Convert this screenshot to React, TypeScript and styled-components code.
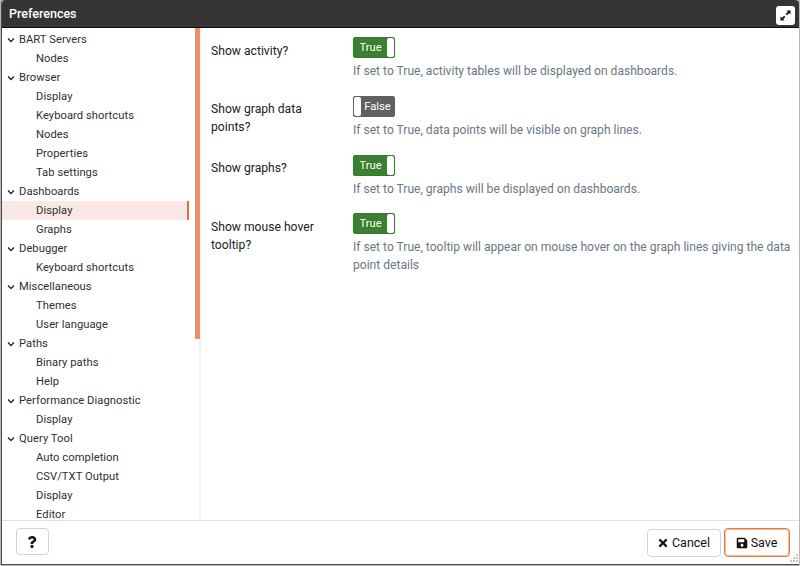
import React from 'react';
import styled, { createGlobalStyle } from 'styled-components';
import { FaQuestion, FaSave, FaTimes } from 'react-icons/fa';

const GlobalStyle = createGlobalStyle`
  *, *::before, *::after { box-sizing: border-box; }
  html, body { margin: 0; padding: 0; background: #b9b4bb; overflow: hidden; }
  body { font-family: Roboto, "Liberation Sans", sans-serif; color: #222; }
`;

const Page = styled.div`
  width: 800px;
  height: 566px;
  padding: 0 1px 1px 1px;
`;

const Dialog = styled.div`
  position: relative;
  display: flex;
  flex-direction: column;
  width: 798px;
  height: 565px;
  background: #fff;
  border: solid #4b494d;
  border-width: 0 0 1px 1px;
  border-radius: 4px 4px 0 0;
  overflow: hidden;
`;

const Header = styled.header`
  flex: none;
  display: flex;
  align-items: center;
  justify-content: space-between;
  height: 28px;
  padding: 0 4px 0 7px;
  background: #363435;
  border-bottom: 1px solid #0c0c0c;
  color: #fff;
`;

const Title = styled.h1`
  margin: 0;
  font-size: 12.5px;
  font-weight: 500;
  line-height: 18px;
`;

const ExpandButton = styled.button`
  display: flex;
  align-items: center;
  justify-content: center;
  width: 19px;
  height: 19px;
  margin-top: 4px;
  padding: 0;
  border: 0;
  border-radius: 3px;
  background: #fff;
`;

const Body = styled.div`
  flex: none;
  display: flex;
  height: 492px;
`;

const Sidebar = styled.nav`
  flex: none;
  display: flex;
  width: 199px;
  border-right: 2px solid #eff1f3;
`;

const Tree = styled.ul`
  flex: none;
  width: 193px;
  height: 492px;
  margin: 0;
  padding: 2px 6px 0 0;
  list-style: none;
  overflow: hidden;
`;

const TreeRow = styled.li<{ $child: boolean; $selected: boolean }>`
  display: flex;
  align-items: center;
  height: 19px;
  padding: 0 0 0 ${p => (p.$child ? '34px' : '5px')};
  line-height: 18px;
  background: ${p => (p.$selected ? '#f9e8e6' : 'transparent')};
  border-right: 2px solid ${p => (p.$selected ? '#dc7439' : 'transparent')};
  color: #303030;
  font-size: 11.2px;
  letter-spacing: 0.05px;
  white-space: nowrap;
`;

const Chevron = styled.svg`
  flex: none;
  width: 8px;
  height: 8px;
  margin-right: 4px;
`;

const ScrollThumb = styled.div`
  flex: none;
  width: 5px;
  height: 311px;
  background: #ea9068;
`;

const Settings = styled.main`
  flex: 1;
  padding: 9px 0 0 10px;
`;

const Setting = styled.section`
  display: grid;
  grid-template-columns: 142px 1fr;
  height: 58.8px;
`;

const Label = styled.div`
  width: 122px;
  padding-top: 4.5px;
  font-size: 12.15px;
  line-height: 18px;
`;

const Toggle = styled.div<{ $on: boolean }>`
  display: flex;
  flex-direction: ${p => (p.$on ? 'row' : 'row-reverse')};
  width: 42px;
  height: 21px;
  border: 1px solid ${p => (p.$on ? '#377a2e' : '#606060')};
  border-radius: 2px;
  background: ${p => (p.$on ? '#3b7f31' : '#606060')};
  overflow: hidden;
`;

const ToggleText = styled.span`
  flex: 1;
  color: #fff;
  font-size: 11.2px;
  line-height: 19px;
  text-align: center;
`;

const Knob = styled.span`
  width: 7px;
  border-radius: 2px;
  background: #fff;
`;

const Help = styled.p`
  width: 444px;
  margin: 4px 0 0;
  color: #6b7785;
  font-size: 12.08px;
  line-height: 18px;
`;

const Footer = styled.footer`
  flex: 1;
  display: flex;
  align-items: center;
  padding: 0 9px 0 14px;
  border-top: 1px solid #dde0e6;
`;

const Button = styled.button<{ $primary?: boolean; $width: number }>`
  display: flex;
  align-items: center;
  justify-content: center;
  gap: 3px;
  width: ${p => p.$width}px;
  height: 28px;
  padding: 0 1px 0 0;
  border: 1px solid ${p => (p.$primary ? '#e9793d' : '#d0d4de')};
  box-shadow: ${p => (p.$primary ? 'inset 0 0 0 1px #f5bd9d' : 'none')};
  border-radius: 4px;
  background: #fff;
  color: #111;
  font: 12.5px Roboto, sans-serif;
`;

const HelpButton = styled(Button)`
  height: 27px;
  margin: -2px auto 0 0;
`;

const SaveButton = styled(Button)`
  height: 29px;
  margin-left: 3px;
`;

const Grip = styled.svg`
  position: absolute;
  right: 0;
  bottom: 1px;
  width: 9px;
  height: 9px;
`;

const groups: [string, string[]][] = [
  ['BART Servers', ['Nodes']],
  ['Browser', ['Display', 'Keyboard shortcuts', 'Nodes', 'Properties', 'Tab settings']],
  ['Dashboards', ['Display', 'Graphs']],
  ['Debugger', ['Keyboard shortcuts']],
  ['Miscellaneous', ['Themes', 'User language']],
  ['Paths', ['Binary paths', 'Help']],
  ['Performance Diagnostic', ['Display']],
  ['Query Tool', ['Auto completion', 'CSV/TXT Output', 'Display', 'Editor']],
];

const settings = [
  { label: 'Show activity?', on: true, help: 'If set to True, activity tables will be displayed on dashboards.' },
  { label: 'Show graph data points?', on: false, help: 'If set to True, data points will be visible on graph lines.' },
  { label: 'Show graphs?', on: true, help: 'If set to True, graphs will be displayed on dashboards.' },
  {
    label: 'Show mouse hover tooltip?',
    on: true,
    help: 'If set to True, tooltip will appear on mouse hover on the graph lines giving the data point details',
  },
];

export default function App() {
  return (
    <Page>
      <GlobalStyle />
      <Dialog>
        <Header>
          <Title>Preferences</Title>
          <ExpandButton aria-label="Maximize">
            <svg width="11" height="11" viewBox="0 0 11 11" fill="#111" stroke="#111">
              <path d="M6.5 0.5h4v4zM0.5 6.5v4h4z" stroke="none" />
              <path d="M6.3 4.7 8.8 2.2M4.7 6.3 2.2 8.8" strokeWidth="1.8" />
            </svg>
          </ExpandButton>
        </Header>
        <Body>
          <Sidebar>
            <Tree>
              {groups.map(([group, items]) => (
                <React.Fragment key={group}>
                  <TreeRow $child={false} $selected={false}>
                    <Chevron viewBox="0 0 8 8">
                      <path d="M1 2.5 4 5.5 7 2.5" fill="none" stroke="#222" strokeWidth="1.3" />
                    </Chevron>
                    {group}
                  </TreeRow>
                  {items.map(item => (
                    <TreeRow key={item} $child $selected={group === 'Dashboards' && item === 'Display'}>
                      {item}
                    </TreeRow>
                  ))}
                </React.Fragment>
              ))}
            </Tree>
            <ScrollThumb />
          </Sidebar>
          <Settings>
            {settings.map(s => (
              <Setting key={s.label}>
                <Label>{s.label}</Label>
                <div>
                  <Toggle $on={s.on}>
                    <ToggleText>{s.on ? 'True' : 'False'}</ToggleText>
                    <Knob />
                  </Toggle>
                  <Help>{s.help}</Help>
                </div>
              </Setting>
            ))}
          </Settings>
        </Body>
        <Footer>
          <HelpButton $width={33} aria-label="Help"><FaQuestion size={12} /></HelpButton>
          <Button $width={74}><FaTimes size={12} />Cancel</Button>
          <SaveButton $width={66} $primary><FaSave size={12} />Save</SaveButton>
        </Footer>
        <Grip viewBox="0 0 9 9" fill="#c4c4c4">
          <path d="M6 0h2v2H6zM3 3h2v2H3zM6 3h2v2H6zM0 6h2v2H0zM3 6h2v2H3zM6 6h2v2H6z" />
        </Grip>
      </Dialog>
    </Page>
  );
}
